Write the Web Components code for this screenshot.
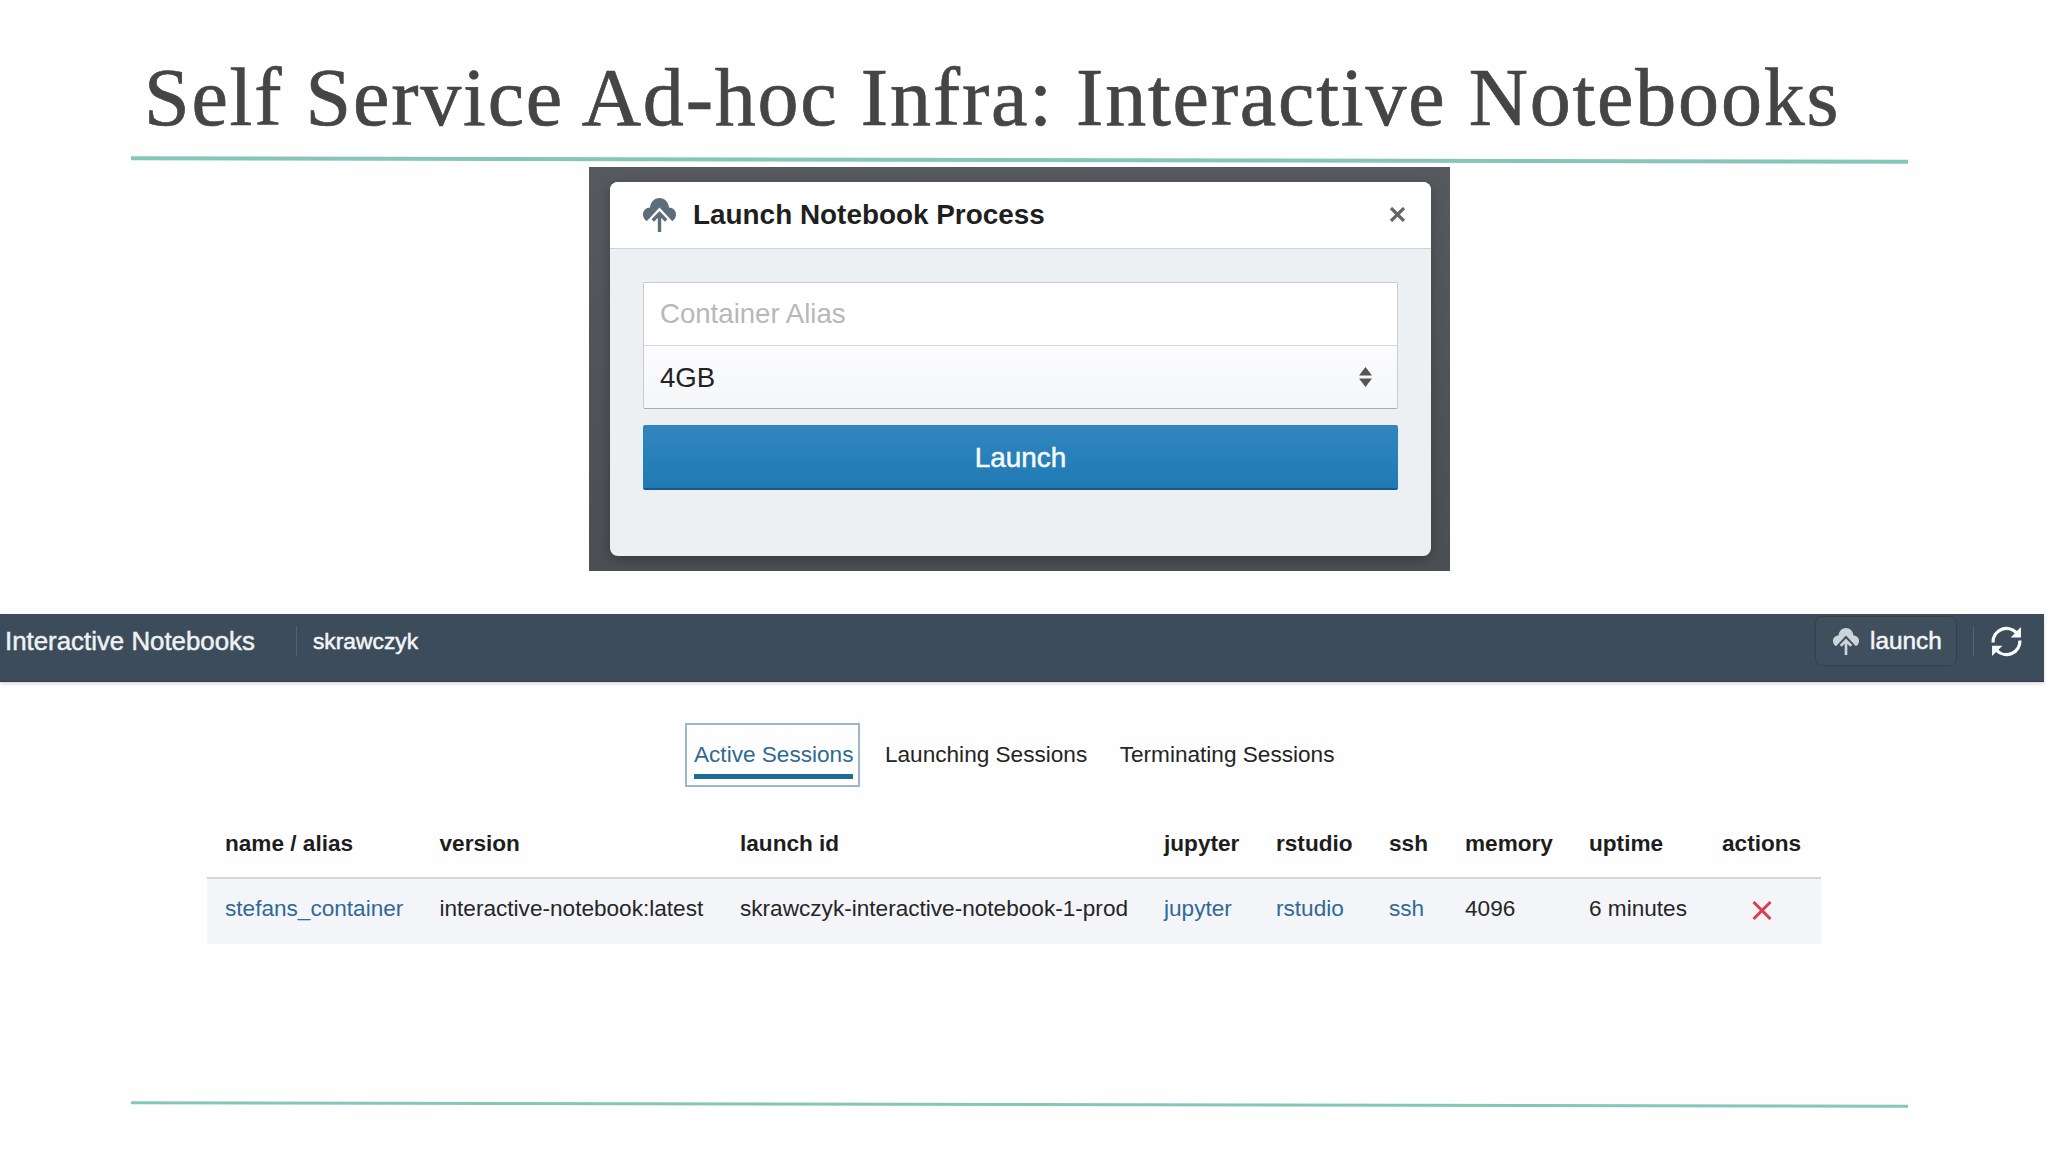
<!DOCTYPE html>
<html lang="en">
<head>
<meta charset="utf-8">
<title>Self Service Ad-hoc Infra: Interactive Notebooks</title>
<style>
  html, body { margin: 0; height: 1152px; overflow: hidden; background: #fefefe; }
  body { font-family: "Liberation Sans", Arial, sans-serif; color: #222; }
</style>
</head>
<body>
<slide-page>
  <slide-title>Self Service Ad-hoc Infra: Interactive Notebooks</slide-title>
  <slide-rule style="--t:4px;--a:0.11deg;--m:20.3px"></slide-rule>
  <launch-dialog></launch-dialog>
  <app-navbar></app-navbar>
  <session-tabs></session-tabs>
  <session-table></session-table>
  <slide-rule style="--t:3px;--a:0.12deg;--m:159.5px"></slide-rule>
</slide-page>

<script>
const CLOUD = `<svg viewBox="0 0 33 34" fill="none" aria-hidden="true">
  <path fill="currentColor" d="M8 24C3 24 0 20.5 0 16.5C0 12.5 3 9.5 7 9.5C7.5 4 11.5 0 16.5 0C21.5 0 25.5 4 26 9.5C30 9.5 33 12.5 33 16.5C33 20.5 30 24 25 24Z"/>
  <path fill="var(--cut)" d="M16.5 9.5L3 24V26H30V24Z"/>
  <path stroke="currentColor" stroke-width="3.4" d="M16.5 34V15.5M9.8 22.5L16.5 15.5L23.2 22.5"/>
</svg>`;

function make(tag, css, html) {
  customElements.define(tag, class extends HTMLElement {
    constructor() {
      super();
      this.attachShadow({ mode: 'open' }).innerHTML = `<style>${css}</style>${html}`;
    }
  });
}

make('slide-page', `:host{display:block;width:2048px;height:1152px;overflow:hidden}`, `<slot></slot>`);

make('slide-title', `
  :host{display:block;box-sizing:content-box;height:80px;padding:57.5px 0 0 144px;
    font:400 82px/80px "Liberation Serif","Times New Roman",serif;letter-spacing:1.8px;color:#454545;white-space:nowrap;
    -webkit-text-stroke:.7px #454545}
`, `<slot></slot>`);

make('slide-rule', `
  :host{display:block;width:1777px;height:var(--t);margin:var(--m) 0 0 131px;
    background:#85c6b9;transform:rotate(var(--a))}
`, ``);

make('launch-dialog', `
  :host{display:block;box-sizing:border-box;width:861px;height:404px;margin:5.2px 0 0 589px;padding:15px 19px 15px 21px;
    background:linear-gradient(#565a5f,#4b4e52)}
  .modal{height:374px;border-radius:8px;overflow:hidden;background:#edf0f3;box-shadow:0 3px 12px rgba(0,0,0,.25);display:flex;flex-direction:column}
  header{box-sizing:border-box;height:67px;background:#fff;border-bottom:1px solid #cfd2d5;display:flex;align-items:center;padding:0 25px 0 33px}
  .cloud{width:33px;height:34px;color:#5d6d7a;--cut:#fff;margin-right:17px;flex:none}
  .cloud svg,.close svg{display:block;width:100%;height:100%}
  h2{margin:0;font:700 27.9px/34px "Liberation Sans",Arial,sans-serif;color:#1f1f1f;flex:1}
  .close{width:17px;height:15px;color:#666}
  .body{padding:33px 33px 0}
  .group{border:1px solid #c9cbce;border-bottom-color:#a9abae;border-radius:2px;background:#fff}
  .field{box-sizing:border-box;height:62px;display:flex;align-items:center;padding:0 16px;font:400 27.6px/32px "Liberation Sans",Arial,sans-serif}
  .ph{color:#b6b8ba;border-bottom:1px solid #d7d9db;height:63px}
  .sel{color:#222;background:linear-gradient(#fcfcfe,#f4f6f8);justify-content:space-between;padding:2px 25px 0 16px}
  .sort{width:13px;height:20px;color:#555;margin-top:-2px}
  .sort svg{display:block}
  button{display:block;box-sizing:border-box;width:100%;height:65px;margin-top:16px;border:0;border-bottom:2px solid #155a88;border-radius:2px;
    background:linear-gradient(#3286bf,#1f7ab4);color:#f6fafd;font:400 27.9px/32px "Liberation Sans",Arial,sans-serif;-webkit-text-stroke:.5px #f6fafd;padding:4px 0 0}
`, `
  <div class="modal">
    <header>
      <span class="cloud">${CLOUD}</span>
      <h2>Launch Notebook Process</h2>
      <span class="close"><svg viewBox="0 0 17 15"><path d="M2 1L15 14M15 1L2 14" stroke="currentColor" stroke-width="3.2" fill="none"/></svg></span>
    </header>
    <div class="body">
      <div class="group">
        <div class="field ph">Container Alias</div>
        <div class="field sel"><span>4GB</span><span class="sort"><svg viewBox="0 0 13 20" width="13" height="20"><path fill="currentColor" d="M6.5 0L13 8.5H0ZM6.5 20L0 11.5H13Z"/></svg></span></div>
      </div>
      <button type="button">Launch</button>
    </div>
  </div>
`);

make('app-navbar', `
  :host{display:flex;align-items:center;box-sizing:border-box;width:2044px;height:68px;margin-top:43px;padding:0 21px 12px 5px;
    background:#3c4c5b;border-bottom:1px solid #2f3c48;box-shadow:0 2px 3px rgba(60,76,91,.2);color:#f4f6f8;white-space:nowrap}
  .brand{font:400 25.85px/32px "Liberation Sans",Arial,sans-serif;color:#eef1f3;-webkit-text-stroke:.5px #eef1f3}
  .sep{width:1px;height:30px;background:#53626f;flex:none}
  .user{font:400 22.8px/30px "Liberation Sans",Arial,sans-serif;-webkit-text-stroke:.5px #f4f6f8}
  .sp{flex:1}
  .btn{box-sizing:border-box;display:flex;align-items:center;width:142px;height:50px;padding-left:17px;border:1px solid #33414e;border-radius:7px;background:#3f4f5e;
    font:400 24.4px/30px "Liberation Sans",Arial,sans-serif;-webkit-text-stroke:.5px #f4f6f8}
  .ic{width:26px;height:27px;color:#cdd4d9;--cut:#3f4f5e;margin-right:11px;flex:none}
  .ic svg,.ref svg{display:block;width:100%;height:100%}
  .ref{width:33px;height:33px;color:#fafbfc;flex:none}
`, `
  <span class="brand">Interactive Notebooks</span>
  <span class="sep" style="margin:0 16px 0 41px"></span>
  <span class="user">skrawczyk</span>
  <span class="sp"></span>
  <span class="btn"><span class="ic">${CLOUD}</span>launch</span>
  <span class="sep" style="margin:0 16px"></span>
  <span class="ref"><svg viewBox="0 0 32 32" fill="none"><path stroke="currentColor" stroke-width="3.2" d="M3 17A13 13 0 0 1 25.5 7.5M29 15A13 13 0 0 1 6.5 24.5"/><path fill="currentColor" d="M30 2V12H20ZM2 30V20H12Z"/></svg></span>
`);

make('session-tabs', `
  :host{display:flex;gap:16.5px;margin:41px 0 0 685px;height:64px;font:400 22.6px/30px "Liberation Sans",Arial,sans-serif;color:#242424;white-space:nowrap}
  .tab{box-sizing:border-box;height:64px;padding:17.5px 8px 0}
  .on{border:2px solid #9ab7cf;padding:15.5px 5px 0 7px;color:#2f6a92}
  .on span{display:block;padding-bottom:3.5px;border-bottom:5px solid #1f6a99}
`, `
  <div class="tab on"><span>Active Sessions</span></div>
  <div class="tab">Launching Sessions</div>
  <div class="tab">Terminating Sessions</div>
`);

make('session-table', `
  :host{display:grid;grid-template-columns:232.5px 300.5px 424px 112px 113px 76px 124px 133px 99px;width:1614px;margin:26px 0 0 207px;
    font:400 22.6px/30px "Liberation Sans",Arial,sans-serif;color:#262626;white-space:nowrap}
  .h{box-sizing:border-box;height:66px;padding-top:16px;font-weight:700;color:#1d1d1d;border-bottom:2px solid #d4d6d8}
  .c{box-sizing:border-box;height:65px;padding-top:15px;background:#f3f5f8}
  .first{padding-left:18px}
  a{color:#2f6a94;text-decoration:none}
  .x{display:block;width:20px;height:19px;margin:7px 0 0 30px;color:#d8414f}
  .x svg{display:block}
`, `
  <div class="h first">name / alias</div><div class="h">version</div><div class="h">launch id</div><div class="h">jupyter</div><div class="h">rstudio</div><div class="h">ssh</div><div class="h">memory</div><div class="h">uptime</div><div class="h">actions</div>
  <div class="c first"><a href="#">stefans_container</a></div><div class="c">interactive-notebook:latest</div><div class="c">skrawczyk-interactive-notebook-1-prod</div><div class="c"><a href="#">jupyter</a></div><div class="c"><a href="#">rstudio</a></div><div class="c"><a href="#">ssh</a></div><div class="c">4096</div><div class="c">6 minutes</div><div class="c"><span class="x"><svg viewBox="0 0 20 19" width="20" height="19"><path d="M1.5 1L18.5 18M18.5 1L1.5 18" stroke="currentColor" stroke-width="3" fill="none"/></svg></span></div>
`);
</script>
</body>
</html>
